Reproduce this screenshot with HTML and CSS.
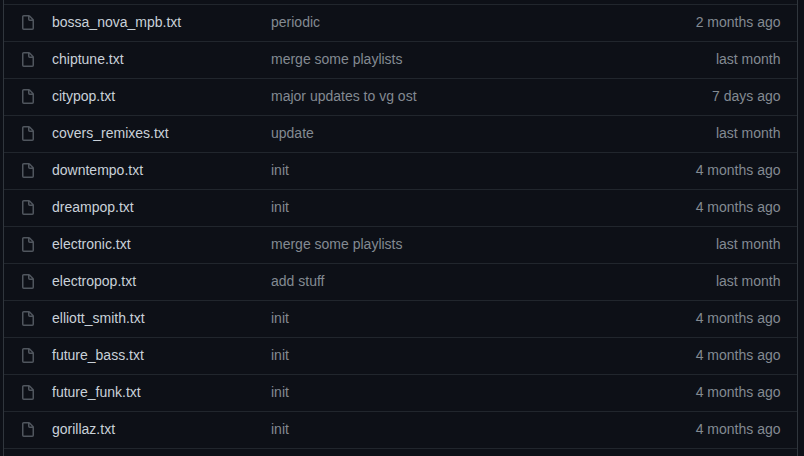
FILE: index.html
```html
<!DOCTYPE html>
<html lang="en">
<head>
<meta charset="utf-8">
<title>Files</title>
<link rel="stylesheet" href="styles.css">
</head>
<body>
<svg class="sprite" width="0" height="0"><symbol id="file" viewBox="0 0 16 16"><path fill-rule="evenodd" d="M3.75 1.5a.25.25 0 00-.25.25v11.5c0 .138.112.25.25.25h8.5a.25.25 0 00.25-.25V6H9.75A1.75 1.75 0 018 4.25V1.5H3.75zm5.75.56v2.19c0 .138.112.25.25.25h2.19L9.5 2.06zM2 1.75C2 .784 2.784 0 3.75 0h5.086c.464 0 .909.184 1.237.513l3.414 3.414c.329.328.513.773.513 1.237v8.086A1.75 1.75 0 0112.25 15h-8.5A1.75 1.75 0 012 13.25V1.75z"/></symbol></svg>
<main class="files">
<div class="row"><svg class="icon"><use href="#file"/></svg><span class="name">bossa_nova_mpb.txt</span><span class="message">periodic</span><span class="age">2 months ago</span></div>
<div class="row"><svg class="icon"><use href="#file"/></svg><span class="name">chiptune.txt</span><span class="message">merge some playlists</span><span class="age">last month</span></div>
<div class="row"><svg class="icon"><use href="#file"/></svg><span class="name">citypop.txt</span><span class="message">major updates to vg ost</span><span class="age">7 days ago</span></div>
<div class="row"><svg class="icon"><use href="#file"/></svg><span class="name">covers_remixes.txt</span><span class="message">update</span><span class="age">last month</span></div>
<div class="row"><svg class="icon"><use href="#file"/></svg><span class="name">downtempo.txt</span><span class="message">init</span><span class="age">4 months ago</span></div>
<div class="row"><svg class="icon"><use href="#file"/></svg><span class="name">dreampop.txt</span><span class="message">init</span><span class="age">4 months ago</span></div>
<div class="row"><svg class="icon"><use href="#file"/></svg><span class="name">electronic.txt</span><span class="message">merge some playlists</span><span class="age">last month</span></div>
<div class="row"><svg class="icon"><use href="#file"/></svg><span class="name">electropop.txt</span><span class="message">add stuff</span><span class="age">last month</span></div>
<div class="row"><svg class="icon"><use href="#file"/></svg><span class="name">elliott_smith.txt</span><span class="message">init</span><span class="age">4 months ago</span></div>
<div class="row"><svg class="icon"><use href="#file"/></svg><span class="name">future_bass.txt</span><span class="message">init</span><span class="age">4 months ago</span></div>
<div class="row"><svg class="icon"><use href="#file"/></svg><span class="name">future_funk.txt</span><span class="message">init</span><span class="age">4 months ago</span></div>
<div class="row"><svg class="icon"><use href="#file"/></svg><span class="name">gorillaz.txt</span><span class="message">init</span><span class="age">4 months ago</span></div>
</main>
</body>
</html>
```
FILE: styles.css
```css
* { box-sizing: border-box; }
body {
  margin: 0;
  height: 456px;
  overflow: hidden;
  background: #0d1017;
  font: 14px/20px "Liberation Sans", Arial, sans-serif;
}
.sprite { display: block; }
.files {
  height: 456px;
  margin: 0 6px 0 3px;
  padding-top: 4px;
  border: solid #30363d;
  border-width: 0 1px;
}
.row {
  display: grid;
  grid-template-columns: 32px 219px 1fr auto;
  align-items: start;
  height: 37px;
  padding: 7px 16.5px 0 16px;
  border-top: 1px solid #21262d;
  color: #838a92;
}
.row:last-child { height: 38px; border-bottom: 1px solid #21262d; }
.icon { width: 16px; height: 16px; margin-top: 3px; fill: #50565e; }
.name { color: #c9d1d9; }
```
